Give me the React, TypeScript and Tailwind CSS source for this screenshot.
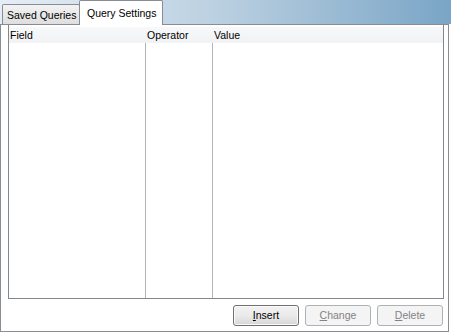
export default function App() {
  return (
    <div className="w-[451px] h-[334px] bg-white text-[10.5px] leading-none text-black font-['Liberation_Sans',Arial,sans-serif] overflow-hidden whitespace-nowrap">
      {/* tab strip */}
      <div className="h-[24px] flex items-end pl-[2px] bg-gradient-to-r from-[#e6eef5] via-[#b9cfe0] to-[#7aa5c6]">
        <div className="h-[20px] w-[78px] flex items-center pl-[4px] pt-[1px] border border-b-0 border-[#898c95] bg-gradient-to-b from-[#f3f3f3] to-[#dedede] rounded-t-[2px]">
          Saved Queries
        </div>
        <div className="h-[25px] w-[84px] -mb-px -ml-px relative z-10 flex items-center pl-[7px] border border-b-0 border-[#898c95] bg-white rounded-t-[2px]">
          Query Settings
        </div>
      </div>

      {/* panel */}
      <div className="w-[449px] h-[308px] border border-[#898c95] bg-white flex flex-col pl-[7px] pr-[4px]">
        {/* list view */}
        <div className="h-[274px] flex flex-col border border-t-0 border-[#828790]">
          <div className="h-[16px] mt-[2px] flex items-center bg-gradient-to-b from-[#f7f8f9] to-[#f1f2f4]">
            <div className="w-[137px] pl-[1px]">Field</div>
            <div className="w-[67px] pl-[1px]">Operator</div>
            <div className="flex-1 pl-[1px]">Value</div>
          </div>
          <div className="flex-1 flex">
            <div className="w-[137px] border-r border-[#b4b4b4]" />
            <div className="w-[67px] border-r border-[#b4b4b4]" />
            <div className="flex-1" />
          </div>
        </div>

        {/* buttons */}
        <div className="flex justify-end gap-[6px] mt-[6px] pr-[1px]">
          <button className="w-[66px] h-[21px] rounded-[3px] border border-[#707070] bg-gradient-to-b from-[#f2f2f2] via-[#ebebeb] to-[#d6d6d6] text-black shadow-[inset_0_0_0_1px_#fbfbfb]">
            <span className="underline underline-offset-[1px]">I</span>nsert
          </button>
          <button disabled className="w-[66px] h-[21px] rounded-[3px] border border-[#adb2b5] bg-[#f4f4f4] text-[#838383]">
            <span className="underline underline-offset-[1px]">C</span>hange
          </button>
          <button disabled className="w-[66px] h-[21px] rounded-[3px] border border-[#adb2b5] bg-[#f4f4f4] text-[#838383]">
            <span className="underline underline-offset-[1px]">D</span>elete
          </button>
        </div>
      </div>
    </div>
  );
}
